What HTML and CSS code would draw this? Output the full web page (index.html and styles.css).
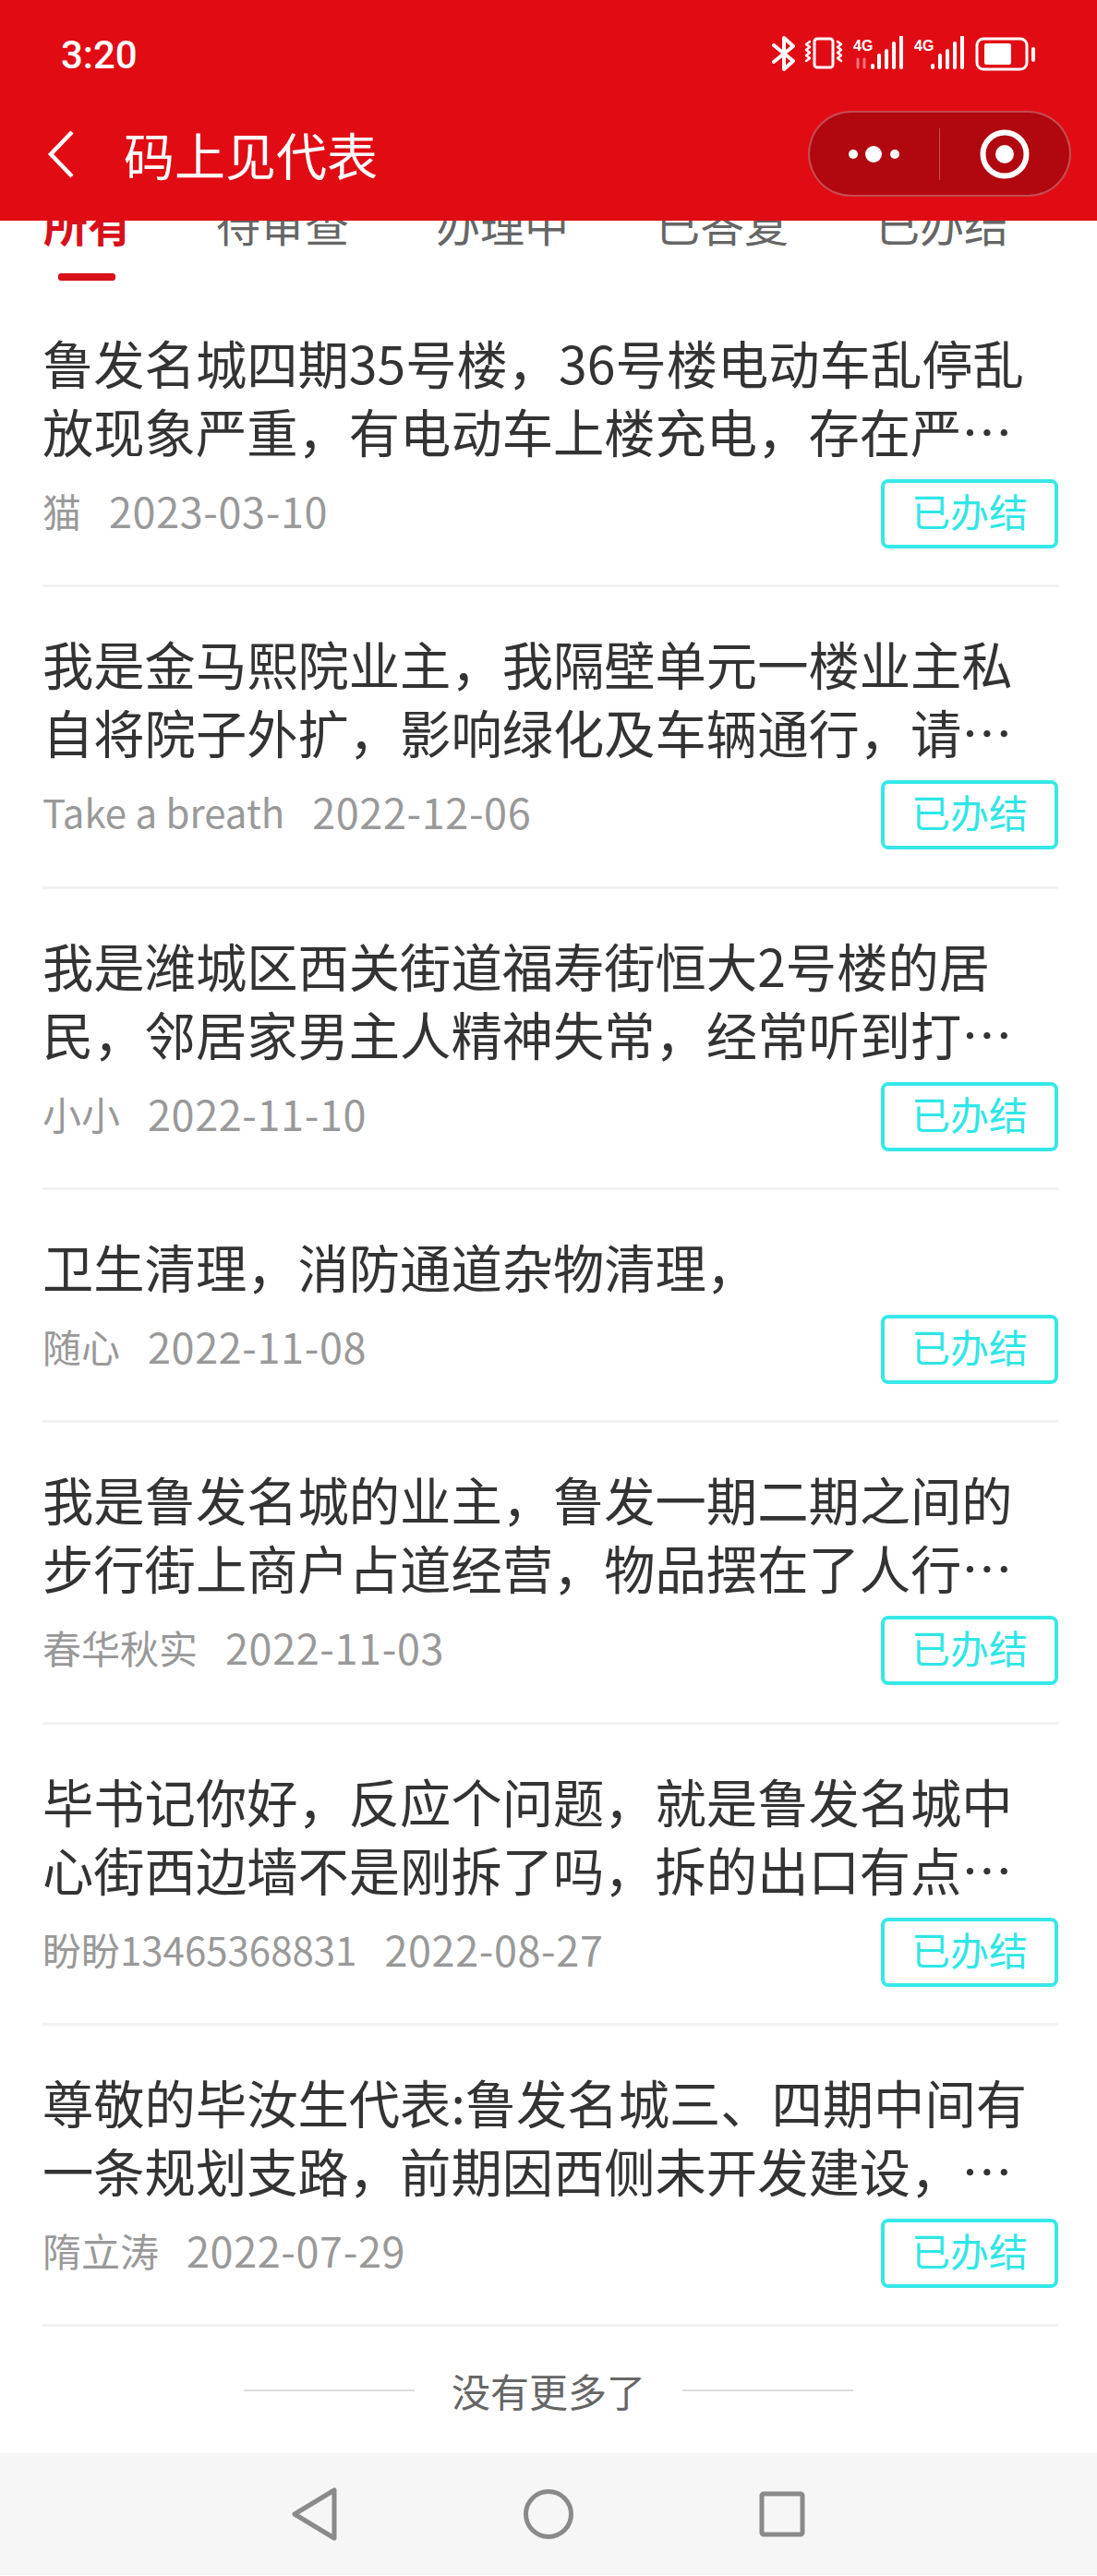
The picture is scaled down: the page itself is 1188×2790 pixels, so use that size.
FILE: index.html
```html
<!DOCTYPE html>
<html lang="zh-CN">
<head>
    <meta charset="UTF-8">
    <meta name="viewport" content="width=device-width, initial-scale=1.0">
    <title>码上见代表</title>
    <link rel="stylesheet" href="styles.css">
</head>
<body>
    <header class="topbar">
        <div class="status-bar">
            <span class="time">3:20</span>
            <svg class="status-icons" width="286" height="40" viewBox="0 0 286 40" fill="none" stroke="#fff" stroke-width="4" stroke-linecap="round" stroke-linejoin="round">
                <!-- bluetooth -->
                <path d="M2 10 L23 27 L13 36 V2 L23 11 L2 28"/>
                <!-- vibrate -->
                <rect x="46" y="3" width="20" height="31" rx="3" stroke-width="3"/>
                <path d="M41 6 l-4 3 l4 3 l-4 3 l4 3 l-4 3 l4 3 l-4 3 M71 6 l4 3 l-4 3 l4 3 l-4 3 l4 3 l-4 3 l4 3" stroke-width="2.5"/>
                <!-- first sim -->
                <text class="net-label" x="88" y="16">4G</text>
                <path d="M93 25 v9 M100 34 v-9" stroke="#f4727a" stroke-width="3"/>
                <path d="M109 32 v2 M116 21 v13 M124 16 v18 M132 8 v26 M140 1 v33" stroke-width="4"/>
                <!-- second sim -->
                <text class="net-label" x="154" y="16">4G</text>
                <path d="M174 32 v2 M182 21 v13 M190 16 v18 M198 8 v26 M206 1 v33" stroke-width="4"/>
                <!-- battery -->
                <rect x="222" y="3" width="54" height="33" rx="7" stroke-width="3"/>
                <rect x="230" y="8" width="29" height="23" rx="2" fill="#fff" stroke="none"/>
                <rect x="281" y="12" width="4" height="16" rx="2" fill="#fff" stroke="none"/>
            </svg>
        </div>
        <div class="nav-row">
            <svg class="back-icon" width="30" height="52" viewBox="0 0 30 52" fill="none" stroke="#fff" stroke-width="4.5">
                <path d="M27 2 L4 26 L27 50"/>
            </svg>
            <span class="page-title">码上见代表</span>
            <div class="capsule">
                <div class="capsule-btn">
                    <svg width="60" height="20" viewBox="0 0 60 20" fill="#fff">
                        <circle cx="7" cy="10" r="5"/>
                        <circle cx="29" cy="10" r="9"/>
                        <circle cx="52" cy="10" r="5"/>
                    </svg>
                </div>
                <div class="capsule-line"></div>
                <div class="capsule-btn">
                    <svg width="54" height="54" viewBox="0 0 54 54" fill="none">
                        <circle cx="27" cy="27" r="23.5" stroke="#fff" stroke-width="6"/>
                        <circle cx="27" cy="27" r="10" fill="#fff"/>
                    </svg>
                </div>
            </div>
        </div>
    </header>

    <nav class="tabs">
        <div class="tab active">所有<i class="tab-bar"></i></div>
        <div class="tab">待审查</div>
        <div class="tab">办理中</div>
        <div class="tab">已答复</div>
        <div class="tab">已办结</div>
        <div class="tab">不予受理</div>
    </nav>

    <ul class="list">
        <li class="item">
            <p class="item-title">鲁发名城四期35号楼，36号楼电动车乱停乱<br>放现象严重，有电动车上楼充电，存在严…</p>
            <div class="item-meta">
                <span class="author">猫</span><span class="date">2023-03-10</span>
                <span class="badge">已办结</span>
            </div>
        </li>
        <li class="item">
            <p class="item-title">我是金马熙院业主，我隔壁单元一楼业主私<br>自将院子外扩，影响绿化及车辆通行，请…</p>
            <div class="item-meta">
                <span class="author">Take a breath</span><span class="date">2022-12-06</span>
                <span class="badge">已办结</span>
            </div>
        </li>
        <li class="item">
            <p class="item-title">我是潍城区西关街道福寿街恒大2号楼的居<br>民，邻居家男主人精神失常，经常听到打…</p>
            <div class="item-meta">
                <span class="author">小小</span><span class="date">2022-11-10</span>
                <span class="badge">已办结</span>
            </div>
        </li>
        <li class="item">
            <p class="item-title">卫生清理，消防通道杂物清理，</p>
            <div class="item-meta">
                <span class="author">随心</span><span class="date">2022-11-08</span>
                <span class="badge">已办结</span>
            </div>
        </li>
        <li class="item">
            <p class="item-title">我是鲁发名城的业主，鲁发一期二期之间的<br>步行街上商户占道经营，物品摆在了人行…</p>
            <div class="item-meta">
                <span class="author">春华秋实</span><span class="date">2022-11-03</span>
                <span class="badge">已办结</span>
            </div>
        </li>
        <li class="item">
            <p class="item-title">毕书记你好，反应个问题，就是鲁发名城中<br>心街西边墙不是刚拆了吗，拆的出口有点…</p>
            <div class="item-meta">
                <span class="author">盼盼13465368831</span><span class="date">2022-08-27</span>
                <span class="badge">已办结</span>
            </div>
        </li>
        <li class="item">
            <p class="item-title">尊敬的毕汝生代表:鲁发名城三、四期中间有<br>一条规划支路，前期因西侧未开发建设，…</p>
            <div class="item-meta">
                <span class="author">隋立涛</span><span class="date">2022-07-29</span>
                <span class="badge">已办结</span>
            </div>
        </li>
    </ul>

    <div class="no-more">
        <span class="no-more-line"></span>
        <span class="no-more-text">没有更多了</span>
        <span class="no-more-line"></span>
    </div>

    <footer class="navbar">
        <svg width="50" height="58" viewBox="0 0 50 58" fill="none" stroke="#8a8a8a" stroke-width="5" stroke-linejoin="round">
            <path d="M46 3 V55 L3 29 Z"/>
        </svg>
        <svg width="54" height="54" viewBox="0 0 54 54" fill="none" stroke="#8a8a8a" stroke-width="5">
            <circle cx="27" cy="27" r="24.5"/>
        </svg>
        <svg width="50" height="50" viewBox="0 0 50 50" fill="none" stroke="#8a8a8a" stroke-width="5" stroke-linejoin="round">
            <rect x="3" y="3" width="44" height="44" rx="2"/>
        </svg>
    </footer>
</body>
</html>
```

FILE: styles.css
```css
* {
    box-sizing: border-box;
}

body {
    margin: 0;
    width: 1188px;
    height: 2790px;
    overflow: hidden;
    background-color: #fff;
    font-family: "Noto Sans CJK SC", "Noto Sans", sans-serif;
}

.topbar {
    height: 239px;
    padding: 0 28px 0 51px;
    background-color: #e10b14;
    color: #fff;
}

.status-bar {
    display: flex;
    justify-content: space-between;
    align-items: center;
    height: 118px;
    padding: 0 38px 0 15px;
}

.time {
    font-family: Roboto, sans-serif;
    font-size: 42px;
    font-weight: 500;
}

.net-label {
    font-family: "Liberation Sans", sans-serif;
    font-size: 16px;
    font-weight: bold;
    fill: #fff;
    stroke: none;
}

.nav-row {
    display: flex;
    align-items: center;
    height: 97px;
}

.back-icon {
    flex-shrink: 0;
}

.page-title {
    margin-left: 53px;
    font-size: 55px;
    line-height: 1;
}

.capsule {
    display: flex;
    align-items: center;
    width: 285px;
    height: 93px;
    margin-left: auto;
    background-color: #b1070f;
    border: 2px solid rgba(255, 255, 255, 0.28);
    border-radius: 47px;
}

.capsule-btn {
    flex: 1;
    display: flex;
    justify-content: center;
    align-items: center;
}

.capsule-line {
    width: 1px;
    height: 56px;
    background-color: rgba(255, 255, 255, 0.3);
}

.tabs {
    display: flex;
    gap: 94px;
    height: 71px;
    padding-left: 47px;
    overflow: hidden;
    white-space: nowrap;
}

.tab {
    position: relative;
    flex-shrink: 0;
    margin-top: -31px;
    font-size: 48px;
    line-height: 66px;
    color: #666;
}

.tab.active {
    margin-right: -3px;
    font-weight: bold;
    color: #d7101a;
}

.tab-bar {
    position: absolute;
    left: 16px;
    top: 88px;
    width: 62px;
    height: 8px;
    background-color: #d7101a;
    border-radius: 3px;
}

.list {
    margin: 0;
    padding: 0 42px 0 46px;
    list-style: none;
}

.item {
    padding: 45px 0 39.33px;
    border-bottom: 3px solid #f2f2f2;
}

.item-title {
    margin: 0;
    font-size: 55.3px;
    line-height: 74px;
    white-space: nowrap;
    color: #333;
}

.item-meta {
    display: flex;
    align-items: center;
    margin-top: 16px;
    font-size: 42px;
    line-height: 60px;
    color: #999;
}

/* the text sits a little above the badge's centre */
.author,
.date {
    margin-bottom: 7px;
}

.author {
    margin-right: 30px;
}

.date {
    font-size: 45px;
    letter-spacing: 0.6px;
}

.badge {
    width: 192px;
    height: 75px;
    margin-left: auto;
    border: 4px solid #36e8e8;
    border-radius: 8px;
    font-size: 42px;
    line-height: 60px;
    text-align: center;
    color: #2fe6e6;
}

.no-more {
    display: flex;
    justify-content: center;
    align-items: center;
    gap: 40px;
    height: 137px;
}

.no-more-line {
    width: 185px;
    height: 2px;
    background-color: #ddd;
}

.no-more-text {
    font-size: 42px;
    color: #666;
}

.navbar {
    display: flex;
    justify-content: space-between;
    align-items: center;
    height: 132px;
    padding: 0 316px;
    background-color: #f6f6f6;
}
```
